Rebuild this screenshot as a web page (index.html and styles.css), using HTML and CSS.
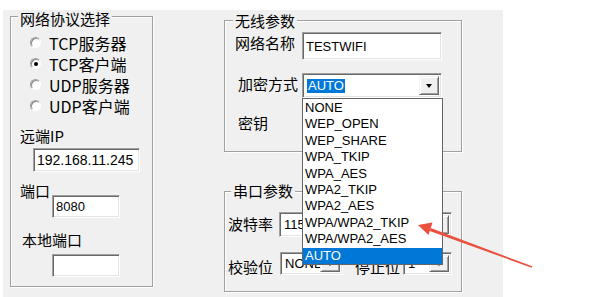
FILE: index.html
```html
<!DOCTYPE html>
<html lang="zh-CN">
<head>
    <meta charset="UTF-8">
    <title>网络设置</title>
    <link rel="stylesheet" href="styles.css">
</head>
<body>
    <div class="dlg">
        <!-- 网络协议 -->
        <div class="group group-net">
            <div class="group-title">网络协议选择</div>
            <div class="radios">
                <div class="radio-row"><span class="radio"></span><span>TCP服务器</span></div>
                <div class="radio-row"><span class="radio checked"></span><span>TCP客户端</span></div>
                <div class="radio-row"><span class="radio"></span><span>UDP服务器</span></div>
                <div class="radio-row"><span class="radio"></span><span>UDP客户端</span></div>
            </div>
            <div class="label label-ip">远端IP</div>
            <input class="edit edit-ip" value="192.168.11.245">
            <div class="port-row">
                <span class="label">端口</span>
                <input class="edit edit-port" value="8080">
            </div>
            <div class="label label-local">本地端口</div>
            <input class="edit edit-port edit-local" value="">
        </div>

        <div class="right-col">
            <!-- 无线参数 -->
            <div class="group group-wifi">
                <div class="group-title">无线参数</div>
                <div class="form-row row-ssid">
                    <span class="label">网络名称</span>
                    <input class="edit edit-ssid" value="TESTWIFI">
                </div>
                <div class="form-row row-enc">
                    <span class="label">加密方式</span>
                    <div class="combo combo-enc">
                        <span class="combo-text"><span class="sel">AUTO</span></span>
                        <span class="combo-btn"></span>
                    </div>
                </div>
                <div class="form-row row-key">
                    <span class="label">密钥</span>
                    <input class="edit edit-key" value="">
                </div>
            </div>

            <!-- 串口参数 -->
            <div class="group group-uart">
                <div class="group-title">串口参数</div>
                <div class="form-row row-baud">
                    <span class="label">波特率</span>
                    <div class="combo combo-baud">
                        <span class="combo-text">115200</span>
                        <span class="combo-btn"></span>
                    </div>
                </div>
                <div class="form-row row-parity">
                    <span class="label">校验位</span>
                    <div class="combo combo-parity">
                        <span class="combo-text">NONE</span>
                        <span class="combo-btn"></span>
                    </div>
                    <span class="label label-stop">停止位</span>
                    <div class="combo combo-stop">
                        <span class="combo-text">1</span>
                        <span class="combo-btn"></span>
                    </div>
                </div>
            </div>
        </div>

        <!-- 加密方式 下拉列表 -->
        <ul class="droplist">
            <li>NONE</li>
            <li>WEP_OPEN</li>
            <li>WEP_SHARE</li>
            <li>WPA_TKIP</li>
            <li>WPA_AES</li>
            <li>WPA2_TKIP</li>
            <li>WPA2_AES</li>
            <li>WPA/WPA2_TKIP</li>
            <li>WPA/WPA2_AES</li>
            <li class="hl">AUTO</li>
        </ul>
    </div>

    <svg class="arrow" width="596" height="297" viewBox="0 0 596 297">
        <polygon fill="#e9503e" points="532.3,266.3 531.7,267.7 429.7,230.9 430.7,228.1"/>
        <polygon fill="#e9503e" points="418,225 432.5,222.5 428.5,235"/>
    </svg>
</body>
</html>
```

FILE: styles.css
```css
body {
    margin: 0;
    width: 596px;
    height: 297px;
    overflow: hidden;
    background: #ffffff;
}
.dlg {
    position: relative;
    box-sizing: border-box;
    width: 500px;
    height: 287px;
    margin: 10px 0 0 3px;
    padding-left: 7px;
    background: #f0f0f0;
    display: flex;
    align-items: flex-start;
    gap: 71px;
    font-family: "Noto Sans CJK SC", sans-serif;
    font-size: 15px;
    color: #000;
}
.group {
    box-sizing: border-box;
    border: 1px solid #a0a0a0;
    box-shadow: 1px 1px 0 #fff, inset 1px 1px 0 #fff;
    display: flex;
    flex-direction: column;
    align-items: flex-start;
}
.group-title {
    line-height: 18px;
    padding: 0 2px;
    background: #f0f0f0;
}
.label {
    line-height: 18px;
    white-space: nowrap;
}

/* left box */
.group-net {
    width: 143px;
    height: 271px;
    margin-top: 6px;
    padding-left: 9px;
}
.group-net .group-title {
    margin: -7px 0 0 -2px;
}
.radios {
    margin-top: 4px;
}
.radio-row {
    height: 21px;
    display: flex;
    align-items: center;
    gap: 8px;
    margin-left: 10px;
    font-size: 16px;
    line-height: 18px;
}
.radio {
    box-sizing: border-box;
    width: 11px;
    height: 11px;
    border-radius: 50%;
    border: 1px solid;
    border-color: #a0a0a0 #ffffff #ffffff #a0a0a0;
    background: #fff;
    box-shadow: inset 1px 1px 0 #8a8a8a;
    display: flex;
    align-items: center;
    justify-content: center;
}
.radio.checked::after {
    content: "";
    width: 4px;
    height: 4px;
    border-radius: 50%;
    background: #000;
}
.label-ip {
    margin-top: 11px;
}
.edit {
    box-sizing: border-box;
    margin: 0;
    padding: 0 3px;
    border: 1px solid;
    border-color: #a0a0a0 #ffffff #ffffff #a0a0a0;
    box-shadow: inset 1px 1px 0 #696969, inset -1px -1px 0 #e3e3e3;
    background: #fff;
    font-family: "Liberation Sans", sans-serif;
    font-size: 13px;
    color: #000;
    outline: none;
}
.edit-ip {
    width: 107px;
    height: 24px;
    margin: 3px 0 0 13px;
    font-size: 14px;
}
.port-row {
    display: flex;
    align-items: flex-start;
    margin-top: 10px;
}
.port-row .label {
    width: 32px;
}
.edit-port {
    width: 68px;
    height: 23px;
    margin-top: 13px;
}
.label-local {
    margin: 13px 0 0 2px;
}
.edit-local {
    margin: 5px 0 0 32px;
}

/* right column */
.right-col {
    width: 238px;
    margin-top: 10px;
    display: flex;
    flex-direction: column;
}
.group-wifi {
    height: 132px;
}
.group-wifi .group-title {
    margin: -9px 0 0 8px;
}
.form-row {
    display: flex;
    align-items: flex-start;
}
.row-ssid {
    margin-top: 2px;
}
.row-ssid .label {
    width: 60px;
    margin: 2px 0 0 10px;
}
.edit-ssid {
    width: 140px;
    height: 28px;
    margin-left: 7px;
}
.row-enc {
    margin-top: 13px;
}
.row-enc .label,
.row-key .label {
    width: 60px;
    margin: 2px 0 0 13px;
}
.row-key {
    margin-top: 14px;
}
.edit-key {
    width: 140px;
    height: 25px;
    margin-left: 4px;
}

/* combobox */
.combo {
    box-sizing: border-box;
    display: flex;
    border: 1px solid;
    border-color: #a0a0a0 #ffffff #ffffff #a0a0a0;
    box-shadow: inset 1px 1px 0 #696969, inset -1px -1px 0 #e3e3e3;
    background: #fff;
    padding: 2px 2px 2px 2px;
    font-family: "Liberation Sans", sans-serif;
    font-size: 13px;
}
.combo-text {
    flex: 1;
    min-width: 0;
    overflow: hidden;
    white-space: nowrap;
    display: flex;
    align-items: center;
    padding-left: 2px;
}
.sel {
    background: #0078d7;
    color: #fff;
    line-height: 14px;
    padding: 0 1px;
}
.combo-btn {
    box-sizing: border-box;
    width: 20px;
    border: 1px solid;
    border-color: #f0f0f0 #696969 #696969 #f0f0f0;
    box-shadow: inset 1px 1px 0 #fff, inset -1px -1px 0 #a0a0a0;
    background: #f0f0f0;
    display: flex;
    align-items: center;
    justify-content: center;
}
.combo-btn::after {
    content: "";
    border-style: solid;
    border-width: 4px 3.5px 0 3.5px;
    border-color: #000 transparent transparent transparent;
}
.combo-enc {
    width: 140px;
    height: 25px;
    margin-left: 4px;
}

.group-uart {
    height: 101px;
    margin-top: 39px;
}
.group-uart .group-title {
    margin: -10px 0 0 6px;
}
.row-baud {
    margin-top: 12px;
}
.row-baud .label,
.row-parity .label {
    width: 45px;
    margin: 3px 0 0 3px;
}
.combo-baud {
    width: 173px;
    height: 25px;
    margin-left: 6px;
}
.row-parity {
    margin-top: 15px;
}
.row-parity .label {
    margin-top: 6px;
}
.combo-parity {
    width: 63px;
    height: 23px;
    margin-left: 7px;
}
.row-parity .label-stop {
    margin-left: 12px;
}
.combo-stop {
    width: 49px;
    height: 23px;
    margin-left: 3px;
}

/* dropdown list */
.droplist {
    position: absolute;
    left: 299px;
    top: 88px;
    box-sizing: border-box;
    width: 141px;
    height: 167px;
    margin: 0;
    padding: 1px 0 0 0;
    list-style: none;
    border: 1px solid #646464;
    background: #fff;
    font-family: "Liberation Sans", sans-serif;
    font-size: 13px;
}
.droplist li {
    line-height: 16.4px;
    height: 16.4px;
    padding-left: 2px;
    white-space: nowrap;
}
.droplist li.hl {
    background: #0078d7;
    color: #fff;
}

.arrow {
    position: absolute;
    left: 0;
    top: 0;
    pointer-events: none;
}
```
